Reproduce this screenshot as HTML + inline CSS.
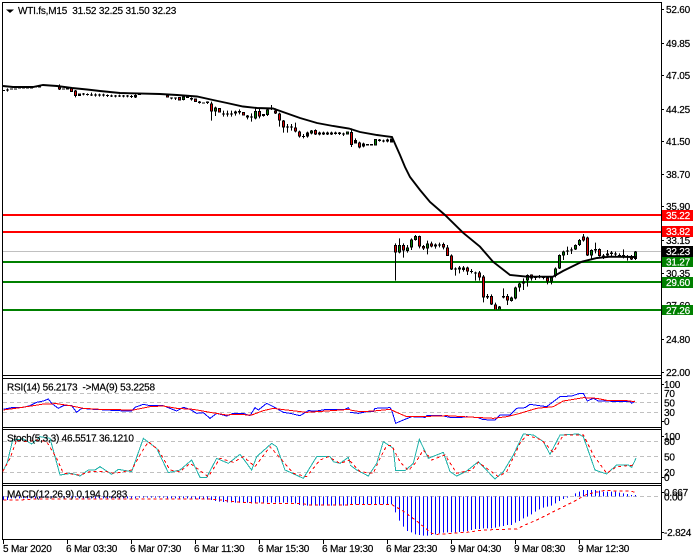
<!DOCTYPE html>
<html>
<head>
<meta charset="utf-8">
<style>
html,body{margin:0;padding:0;background:#fff;width:700px;height:560px;overflow:hidden}
svg{display:block}
text{font-family:"Liberation Sans",sans-serif;font-size:10px;letter-spacing:-.2px;fill:#000;stroke:#000;stroke-width:.2px}
.w{fill:#fff;stroke:#fff}
</style>
</head>
<body>
<svg width="700" height="560" viewBox="0 0 700 560" xmlns="http://www.w3.org/2000/svg">
<rect width="700" height="560" fill="#fff"/>

<!-- horizontal levels -->
<g shape-rendering="crispEdges">
<path d="M3 251.5H661" stroke="#c0c0c0" stroke-width="1"/>
<path d="M3 215H661M3 232H661" stroke="#ff0000" stroke-width="2"/>
<path d="M3 262H661M3 282H661M3 310H661" stroke="#008000" stroke-width="2"/>
</g>

<!-- candles part 1 -->
<g transform="scale(1,.33333)" fill="none" shape-rendering="crispEdges">
<path stroke="#000" stroke-width="1" d="M59.5 253V270M7.5 265V275M75.5 270V292M83.5 279V286M87.5 280V287M91.5 278V288M95.5 280V290M99.5 281V290M103.5 281V290M107.5 283V291M111.5 284V291M115.5 285V292M119.5 284V291M123.5 285V292M127.5 285V292M131.5 285V294M135.5 283V294M171.5 292V298M175.5 292V300M179.5 291V301M183.5 288V301M191.5 292V302M199.5 303V311M207.5 304V312M211.5 305V362M215.5 320V348M223.5 332V350M227.5 332V350M231.5 332V350M235.5 332V347M239.5 328V343M247.5 345V358M251.5 340V365M255.5 325V358M259.5 325V355M263.5 342V350M267.5 325V348M271.5 315V330M275.5 325V342M279.5 338V380M283.5 360V398M287.5 372V398M291.5 372V392M295.5 368V397M299.5 392V413M303.5 402V415M307.5 395V413M311.5 390V403M315.5 388V405M319.5 395V406M323.5 395V405M327.5 395V405M331.5 395V405M335.5 395V404M339.5 396V405M343.5 398V408M351.5 385V441M355.5 415V430M359.5 425V445M363.5 428V442M379.5 417V425M383.5 419V427M387.5 416V427"/>
<path stroke="#000" stroke-width="3" d="M3.5 270V273M7.5 268V272M11.5 266V269M15.5 266V269M19.5 262V265M23.5 262V265M27.5 262V265M31.5 262V265M35.5 259V262M39.5 259V262M43.5 255V258M47.5 255V258M51.5 255V258M55.5 257V260M59.5 260V269M63.5 266V269M67.5 264V268M71.5 262V276M75.5 272V288M79.5 281V288M83.5 281V284M87.5 282V285M91.5 283V286M95.5 284V287M99.5 284V287M103.5 284V287M107.5 285V288M111.5 286V289M115.5 287V290M119.5 286V289M123.5 287V290M127.5 287V290M131.5 288V291M135.5 285V292M139.5 282V285M143.5 281V284M147.5 281V284M151.5 281V284M155.5 281V284M159.5 281V284M163.5 282V285M167.5 285V293M171.5 292V295M175.5 292V295M179.5 291V301M183.5 290V300M187.5 290V294M191.5 294V298M195.5 296V306M199.5 305V309M203.5 307V310M207.5 305V309M211.5 310V335M215.5 323V335M219.5 324V338M223.5 340V343M227.5 340V343M231.5 340V343M235.5 335V340M239.5 333V337M243.5 336V347M247.5 347V352M251.5 350V353M255.5 333V356M259.5 333V350M263.5 342V348M267.5 328V345M271.5 322V325M275.5 332V340M279.5 340V362M283.5 362V382M287.5 380V383M291.5 380V383M295.5 382V395M299.5 394V410M303.5 408V411M307.5 398V410M311.5 392V400M315.5 390V403M319.5 397V404M323.5 397V403M327.5 397V403M331.5 397V403M335.5 397V402M339.5 398V402M343.5 400V403M347.5 394V403M351.5 396V435M355.5 420V430M359.5 427V442M363.5 430V440M367.5 432V436M371.5 432V436M375.5 417V437M379.5 419V423M383.5 421V424M387.5 418V425M391.5 415V428"/>
<path stroke="#e00000" stroke-width="1" d="M59.5 263V266M71.5 265V273M75.5 275V285M167.5 288V290M179.5 294V298M195.5 299V303M211.5 313V332M219.5 327V335M243.5 339V344M259.5 336V347M275.5 335V337M279.5 343V359M283.5 365V379M295.5 385V392M299.5 397V407M315.5 393V400M351.5 399V432M359.5 430V439"/>
<path stroke="#008000" stroke-width="1" d="M183.5 293V297M215.5 326V332M255.5 336V353M267.5 331V342M311.5 395V397M347.5 397V400M375.5 420V434"/>
</g>

<!-- candles part 2 -->
<g transform="translate(0,190) scale(1,.33333)" fill="none" shape-rendering="crispEdges">
<path stroke="#000" stroke-width="1" d="M395.5 160V272M399.5 145V190M403.5 160V203M407.5 165V188M411.5 145V180M415.5 135V152M419.5 137V175M423.5 165V180M427.5 152V193M431.5 155V172M435.5 160V176M439.5 158V172M443.5 158V178M447.5 165V198M451.5 193V240M455.5 232V257M459.5 228V250M463.5 228V245M467.5 230V255M471.5 237V250M475.5 245V272M479.5 243V272M483.5 255V337M487.5 312V327M491.5 313V345M495.5 338V358M499.5 348V358M503.5 295V325M507.5 312V345M511.5 320V335M515.5 290V328M519.5 278V305M523.5 265V300M527.5 253V290M531.5 253V272M535.5 258V270M539.5 255V265M543.5 258V268M547.5 258V283M551.5 258V283M555.5 232V262M559.5 193V237M563.5 182V210M567.5 170V195M571.5 172V192M575.5 163V180M579.5 147V168M583.5 132V155M587.5 140V198M591.5 178V210M595.5 158V190M599.5 175V200M603.5 192V207M607.5 180V203M611.5 183V200M615.5 185V202M619.5 190V200M623.5 178V205M627.5 195V212M631.5 195V210M635.5 183V210"/>
<path stroke="#000" stroke-width="3" d="M395.5 165V188M399.5 165V188M403.5 165V182M407.5 172V183M411.5 148V172M415.5 138V150M419.5 138V170M423.5 168V176M427.5 160V176M431.5 160V170M435.5 163V170M439.5 163V166M443.5 162V172M447.5 172V198M451.5 196V238M455.5 235V238M459.5 233V238M463.5 232V240M467.5 233V245M471.5 243V246M475.5 247V250M479.5 247V263M483.5 260V322M487.5 318V323M491.5 318V343M495.5 343V358M499.5 350V358M503.5 318V322M507.5 318V332M511.5 323V333M515.5 292V325M519.5 280V293M523.5 275V280M527.5 255V272M531.5 253V265M535.5 261V264M539.5 259V262M543.5 261V264M547.5 263V275M551.5 262V275M555.5 235V258M559.5 195V235M563.5 184V197M567.5 181V184M571.5 178V182M575.5 165V178M579.5 150V165M583.5 140V152M587.5 142V196M591.5 180V197M595.5 177V182M599.5 177V198M603.5 196V202M607.5 190V197M611.5 188V192M615.5 190V193M619.5 195V198M623.5 195V200M627.5 198V202M631.5 200V208M635.5 185V207"/>
<path stroke="#e00000" stroke-width="1" d="M395.5 168V185M403.5 168V179M419.5 141V167M423.5 171V173M431.5 163V167M443.5 165V169M447.5 175V195M451.5 199V235M467.5 236V242M479.5 250V260M483.5 263V319M491.5 321V340M495.5 346V358M507.5 321V329M531.5 256V262M547.5 266V272M583.5 143V149M587.5 145V193M599.5 180V195M631.5 203V205"/>
<path stroke="#008000" stroke-width="1" d="M399.5 168V185M407.5 175V180M411.5 151V169M415.5 141V147M427.5 163V173M499.5 353V358M511.5 326V330M515.5 295V322M519.5 283V290M527.5 258V269M551.5 265V272M555.5 238V255M559.5 198V232M563.5 187V194M575.5 168V175M579.5 153V162M591.5 183V194M635.5 188V204"/>
</g>

<!-- moving average -->
<g fill="none" stroke="#000" stroke-width="1.9">
<polyline points="3,86 13,87 33,87 43,85 57,86 72,88 87,89.5 100,91 120,93 160,94 177,95 197,96.5 213,100 227,103 243,106.5 257,108 273,108.5 283,112 300,118 317,123 333,126 349,128.5 360,132 377,135 392,137 396,146 400,155 405,167 410,177 420,190 430,202 445,215 463,232.7 480,246.7 493,261.7 510,275 527,276.7 553,276.7 563,271 582,261.7 597,258 610,256.7 636,257"/>
</g>

<!-- panel borders -->
<g fill="none" stroke="#000" stroke-width="1" shape-rendering="crispEdges">
<path d="M2.5 2.5H661.5V539.5H2.5Z"/>
<path d="M2 375.5H662M2 378.5H662M2 427.5H662M2 429.5H662M2 483.5H662M2 485.5H662"/>
<path d="M661 9.5H664M661 43.5H664M661 75.5H664M661 109.5H664M661 141.5H664M661 174.5H664M661 206.5H664M661 240.5H664M661 273.5H664M661 305.5H664M661 339.5H664M661 372.5H664"/>
<path d="M661 384.5H664M661 421.5H664M661 436.5H664M661 477.5H664M661 492.5H664M661 532.5H664"/>
<path d="M3.5 540V544M67.5 540V544M131.5 540V544M195.5 540V544M259.5 540V544M323.5 540V544M387.5 540V544M451.5 540V544M515.5 540V544M579.5 540V544"/>
</g>

<!-- dashed grid -->
<g fill="none" stroke="#c0c0c0" stroke-width="1" stroke-dasharray="4 3" shape-rendering="crispEdges">
<path d="M3 393.5H661M3 402.5H661M3 412.5H661M3 441.5H661M3 456.5H661M3 472.5H661M3 496.5H661"/>
</g>

<!-- indicators left half (zoom coords) -->
<g transform="translate(0,375) scale(.33333)" fill="none" stroke-width="3" shape-rendering="crispEdges">
<polyline stroke="#0000ff" points="10,103 40,97 70,97 90,92 110,82 130,78 145,72 155,85 175,100 190,92 215,92 230,112 245,100 280,103 320,105 350,107 395,108 405,97 430,88 450,92 490,92 510,100 530,108 550,97 570,103 590,115 610,113 630,130 650,115 680,123 700,115 730,115 750,122 765,98 775,105 800,85 820,95 850,112 870,115 900,122 925,107 950,108 980,103 1035,103 1045,98 1050,105"/>
<polyline stroke="#ff0000" points="10,105 60,98 100,92 130,87 170,86 210,92 250,100 300,103 400,105 450,95 490,93 530,100 580,103 630,112 680,120 700,118 755,120 790,107 820,100 860,105 920,112 980,108 1050,103"/>
<polyline stroke="#20b2aa" points="8,290 22,262 38,195 70,192 95,207 120,185 150,190 180,300 215,295 240,303 265,285 285,285 300,275 335,298 355,283 395,290 430,190 470,220 505,293 540,285 575,255 600,307 620,307 650,250 685,265 720,238 755,285 770,245 815,205 830,215 855,285 910,310 950,245 990,245 1000,260 1020,265 1045,247 1050,265"/>
<polyline stroke="#ff0000" stroke-dasharray="9 9" points="8,290 30,250 50,195 80,200 110,195 140,200 170,250 190,295 240,300 270,290 320,290 345,295 395,285 420,240 445,200 475,225 510,285 540,290 570,265 625,305 660,250 700,262 730,245 765,275 810,215 850,260 880,295 920,305 960,255 985,245 1020,265 1050,255"/>
</g>

<!-- indicators right half (zoom coords) -->
<g transform="translate(350,375) scale(.33333)" fill="none" stroke-width="3" shape-rendering="crispEdges">
<polyline stroke="#0000ff" points="0,112 25,115 50,110 70,110 75,100 120,98 125,105 137,145 160,135 185,125 225,127 230,122 275,122 300,127 335,127 350,125 385,128 400,134 435,135 450,120 480,120 500,100 525,98 540,88 590,95 630,65 665,63 690,55 700,55 712,78 730,70 745,78 840,80 845,85 855,78"/>
<polyline stroke="#ff0000" points="0,105 30,110 70,108 120,103 140,112 170,125 210,125 290,122 340,125 430,130 470,125 510,115 560,100 610,95 640,78 700,68 740,70 770,76 830,77 855,80"/>
<polyline stroke="#20b2aa" points="0,270 20,285 55,303 80,265 100,200 130,220 137,287 165,287 190,265 208,193 235,250 280,232 300,290 320,303 350,288 385,260 435,312 460,290 490,240 520,177 550,180 580,200 600,238 630,180 685,177 700,185 735,285 770,297 800,270 835,270 845,277 858,250"/>
<polyline stroke="#ff0000" stroke-dasharray="9 9" points="0,258 30,290 70,295 90,250 110,212 125,212 150,260 175,287 195,265 220,225 245,255 285,240 320,295 365,285 385,262 445,305 470,290 510,205 530,180 575,195 610,232 640,180 700,180 730,240 770,295 800,275 855,270"/>
</g>

<!-- MACD histogram -->
<g transform="translate(0,375) scale(1,.33333)" fill="none" shape-rendering="crispEdges">
<path stroke="#0000ff" stroke-width="1" d="M3.5 364V375M7.5 364V375M11.5 364V370M15.5 364V370M19.5 364V370M23.5 364V370M27.5 364V370M31.5 364V370M35.5 364V370M39.5 364V370M43.5 364V368M47.5 364V368M51.5 364V368M55.5 364V368M59.5 364V368M63.5 364V368M67.5 364V368M71.5 364V368M75.5 364V368M79.5 364V370M83.5 364V370M87.5 364V370M91.5 364V370M95.5 364V370M99.5 364V370M103.5 364V370M107.5 364V370M111.5 364V370M115.5 364V370M119.5 364V370M123.5 364V370M127.5 364V370M131.5 364V370M135.5 364V370M139.5 364V368M143.5 364V368M147.5 364V368M151.5 364V368M155.5 364V368M159.5 364V368M163.5 364V368M167.5 364V370M171.5 364V370M175.5 364V370M179.5 364V370M183.5 364V370M187.5 364V370M191.5 364V370M195.5 364V372M199.5 364V372M203.5 364V372M207.5 364V374M211.5 364V375M215.5 364V378M219.5 364V380M223.5 364V381M227.5 364V382M231.5 364V382M235.5 364V383M239.5 364V383M243.5 364V383M247.5 364V383M251.5 364V383M255.5 364V383M259.5 364V383M263.5 364V383M267.5 364V383M271.5 364V383M275.5 364V383M279.5 364V383M283.5 364V383M287.5 364V383M291.5 364V383M295.5 364V385M299.5 364V390M303.5 364V392M307.5 364V392M311.5 364V392M315.5 364V392M319.5 364V392M323.5 364V392M327.5 364V392M331.5 364V392M335.5 364V392M339.5 364V392M343.5 364V392M347.5 364V392M351.5 364V388M355.5 364V388M359.5 364V388M363.5 364V388M367.5 364V388M371.5 364V388M375.5 364V388M379.5 364V388M383.5 364V388M387.5 364V388M391.5 364V388M395.5 364V412M399.5 364V437M403.5 364V455M407.5 364V468M411.5 364V472M415.5 364V478M419.5 364V480M423.5 364V482M427.5 364V482M431.5 364V480M435.5 364V478M439.5 364V475M443.5 364V473M447.5 364V472M451.5 364V472M455.5 364V472M459.5 364V471M463.5 364V470M467.5 364V468M471.5 364V465M475.5 364V462M479.5 364V462M483.5 364V460M487.5 364V460M491.5 364V460M495.5 364V458M499.5 364V455M503.5 364V453M507.5 364V450M511.5 364V450M515.5 364V443M519.5 364V438M523.5 364V430M527.5 364V425M531.5 364V418M535.5 364V410M539.5 364V403M543.5 364V398M547.5 364V395M551.5 364V392M555.5 364V385M559.5 364V378M563.5 364V372M567.5 364V368M575.5 355V364M579.5 350V364M583.5 345V364M587.5 345V364M591.5 345V364M595.5 345V364M599.5 347V364M603.5 350V364M607.5 350V364M611.5 350V364M615.5 350V364M619.5 353V364M623.5 355V364M627.5 357V364M631.5 360V364M635.5 360V364"/>
</g>
<g transform="translate(0,375) scale(.33333)" fill="none" stroke="#ff0000" stroke-width="3" stroke-dasharray="9 9" shape-rendering="crispEdges">
<polyline points="10,375 60,375 100,372 630,372 660,375 720,382 800,385 900,385 930,390 1050,390"/>
</g>
<g transform="translate(350,375) scale(.33333)" fill="none" stroke="#ff0000" stroke-width="3" stroke-dasharray="9 9" shape-rendering="crispEdges">
<polyline points="0,388 125,388 135,395 155,405 200,438 245,475 260,478 350,472 400,465 500,462 520,452 560,435 620,405 680,375 710,358 760,347 840,348 855,352"/>
</g>

<!-- header -->
<path d="M6 9.5H14L10 13Z" fill="#000"/>
<text x="18" y="14">WTI.fs,M15&#160;&#160;31.52 32.25 31.50 32.23</text>
<text x="7" y="390.5">RSI(14) 56.2173&#160;&#160;-&gt;MA(9) 53.2258</text>
<text x="7" y="441.5">Stoch(5,3,3) 46.5517 36.1210</text>
<text x="7" y="497.5">MACD(12,26,9) 0.194 0.283</text>

<!-- price axis -->
<text x="666" y="13">52.60</text>
<text x="666" y="47">49.85</text>
<text x="666" y="79">47.05</text>
<text x="666" y="113">44.25</text>
<text x="666" y="145">41.50</text>
<text x="666" y="178">38.70</text>
<text x="666" y="210">35.90</text>
<text x="666" y="244">33.15</text>
<text x="666" y="277">30.35</text>
<text x="666" y="309">27.60</text>
<text x="666" y="343">24.80</text>
<text x="666" y="376">22.00</text>

<!-- price labels -->
<g shape-rendering="crispEdges">
<rect x="662" y="210" width="31" height="11" fill="#ff0000"/>
<rect x="662" y="226" width="31" height="11" fill="#ff0000"/>
<rect x="662" y="246" width="31" height="11" fill="#000"/>
<rect x="662" y="257" width="31" height="10" fill="#008000"/>
<rect x="662" y="277" width="31" height="11" fill="#008000"/>
<rect x="662" y="305" width="31" height="10" fill="#008000"/>
</g>
<text class="w" x="666" y="219">35.22</text>
<text class="w" x="666" y="235">33.82</text>
<text class="w" x="666" y="255">32.23</text>
<text class="w" x="666" y="265.5">31.27</text>
<text class="w" x="666" y="286">29.60</text>
<text class="w" x="666" y="314">27.26</text>

<!-- indicator axes -->
<text x="664" y="388">100</text>
<text x="664" y="397">70</text>
<text x="664" y="406.5">50</text>
<text x="664" y="416">30</text>
<text x="664" y="425">0</text>
<text x="664" y="440">100</text>
<text x="664" y="445">80</text>
<text x="664" y="460.5">50</text>
<text x="664" y="476">20</text>
<text x="664" y="481">0</text>
<text x="664" y="496">0.667</text>
<text x="664" y="500.5">0.00</text>
<text x="664" y="536">-2.824</text>

<!-- time axis -->
<text x="3" y="552">5 Mar 2020</text>
<text x="66" y="552">6 Mar 03:30</text>
<text x="130" y="552">6 Mar 07:30</text>
<text x="194" y="552">6 Mar 11:30</text>
<text x="258" y="552">6 Mar 15:30</text>
<text x="322" y="552">6 Mar 19:30</text>
<text x="386" y="552">6 Mar 23:30</text>
<text x="450" y="552">9 Mar 04:30</text>
<text x="514" y="552">9 Mar 08:30</text>
<text x="578" y="552">9 Mar 12:30</text>
</svg>
</body>
</html>
